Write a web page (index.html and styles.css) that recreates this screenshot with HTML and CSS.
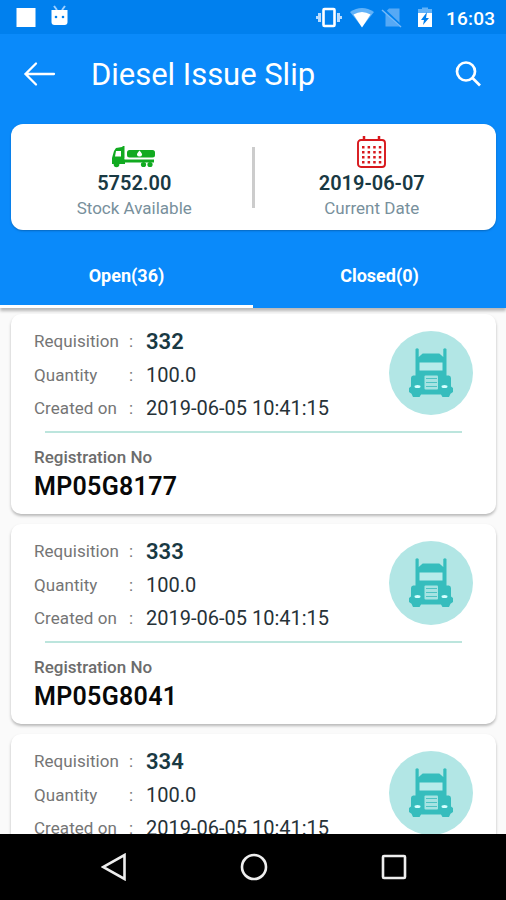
FILE: index.html
```html
<!DOCTYPE html>
<html lang="en">
<head>
<meta charset="utf-8">
<title>Diesel Issue Slip</title>
<link rel="stylesheet" href="styles.css">
</head>
<body>
<svg class="defs" aria-hidden="true">
  <symbol id="truck" viewBox="0 0 44 52">
    <path fill="#36bdbd" d="M6.500 2q1.600-1.600 3.200 0v8l4-3.500h16.600l4 3.500V2q1.600-1.600 3.200 0v26.500h2.300q2 .3 2.200 2.500v8.500l2 1.500v4l-2.500 1.700-1.500 3.300h-6.500l-1.500-2.500h-20L10.500 50H4l-1.500-3.300L0 45v-4l2-1.500V31q.2-2.200 2.200-2.500h2.300z"/>
    <rect x="10.500" y="15.500" width="23" height="8" fill="#b8eceb"/>
    <rect x="15.500" y="28.500" width="13.500" height="14" rx="1" fill="#a5e3e2"/>
    <path d="M17 31.500h11M17 35.500h11M17 39.500h11" stroke="#4cc3c3" stroke-width="1.200"/>
    <ellipse cx="8.500" cy="39.500" rx="3" ry="1.500" fill="#d5ffff"/>
    <ellipse cx="35.500" cy="39.500" rx="3" ry="1.500" fill="#d5ffff"/>
  </symbol>
</svg>
<div class="screen">
  <div class="status">
    <svg width="70" height="34" viewBox="0 0 70 34" fill="#fff">
      <rect x="16.500" y="8" width="19" height="19"/>
      <path d="M54 6l3 4M65 6l-3 4" stroke="#9fd0ff" stroke-width="2"/>
      <path d="M51.500 10h16v12q0 3-3 3h-10q-3 0-3-3z"/>
      <circle cx="56" cy="17" r="1.300" fill="#0080ee"/><circle cx="63" cy="17" r="1.300" fill="#0080ee"/>
    </svg>
    <svg class="status-icons" width="125" height="34" viewBox="0 0 125 34" fill="#fff">
      <path fill="#b9dcff" d="M0 16h2v-3h3v9H2v-3H0zM26 16h-2v-3h-3v9h3v-3h2z"/>
      <rect x="7.500" y="9" width="11" height="17" rx="1" fill="none" stroke="#fff" stroke-width="2.600"/>
      <path fill="#62b2f8" d="M34 12q12-8 24 0L46 27z"/>
      <path d="M37.500 14.500q8.500-5 17 0L46 27.500z"/>
      <path fill="#56a9f5" d="M73 8.500h10.500v18H69.500V12z"/>
      <path d="M67 9l19 18" stroke="#0080ee" stroke-width="3"/>
      <path d="M66 10l19 17" stroke="#75bafa" stroke-width="1.500"/>
      <path fill="#62b2f8" d="M106 7.500h6V9h4v5h-14V9h4z"/>
      <path d="M102 13h14v14h-14z"/>
      <path fill="#0080ee" d="M111 12l-6 8h3l-1 5 6-7h-3z"/>
    </svg>
    <span class="clock">16:03</span>
  </div>
  <header class="toolbar">
    <svg class="back" width="34" height="26" viewBox="0 0 34 26" fill="none" stroke="#fff" stroke-width="2.300" stroke-linecap="round"><path d="M14 2.500L3.500 13 14 23.500M3.500 13H32"/></svg>
    <h1>Diesel Issue Slip</h1>
    <svg class="search" width="28" height="28" viewBox="0 0 28 28" fill="none" stroke="#fff" stroke-width="2.700"><circle cx="12" cy="11.500" r="9"/><path d="M18.500 18l7.500 7.500"/></svg>
  </header>
  <section class="summary">
    <div class="stat left">
      <svg width="44" height="22" viewBox="0 0 44 22" fill="#11aa20">
        <path d="M2 5l2-3 6-1 1-1h1.500v13H42v3.500H13V18H0v-6z"/>
        <path fill="#fff" d="M4 5h5v5.500H3zM12.500 12.500H42v1H12.500z"/>
        <rect x="15" y="4" width="28" height="7.500" rx="2.500"/>
        <path fill="#fff" d="M27.500 4.500q3 3 2.500 4.500-.5 1.500-2.500 1.500T25 9q-.5-1.500 2.500-4.500z"/>
        <circle cx="4.500" cy="18.500" r="2.800"/><circle cx="31.500" cy="18.500" r="2.600"/><circle cx="38" cy="18.500" r="2.600"/>
      </svg>
      <strong>5752.00</strong>
      <span>Stock Available</span>
    </div>
    <div class="divider"></div>
    <div class="stat right">
      <svg width="29" height="32" viewBox="0 0 29 32" fill="none" stroke="#d8181c">
        <rect x="1" y="4" width="27" height="27" rx="3" stroke-width="1.900"/>
        <path d="M7 0v5M22 0v5" stroke-width="2.500"/>
        <path d="M5 11.300h19.500M5 16.300h19.500M5 21.300h19.500M5 26.300h19.500" stroke-width="2.500" stroke-dasharray="2.500 3.100"/>
      </svg>
      <strong>2019-06-07</strong>
      <span>Current Date</span>
    </div>
  </section>
  <nav class="tabs"><div class="tab active">Open(36)</div><div class="tab">Closed(0)</div></nav>
  <main class="list">
    <article class="card">
      <div class="top">
        <dl>
          <dt>Requisition</dt><dd class="colon">:</dd><dd class="number">332</dd>
          <dt>Quantity</dt><dd class="colon">:</dd><dd>100.0</dd>
          <dt>Created on</dt><dd class="colon">:</dd><dd>2019-06-05 10:41:15</dd>
        </dl>
        <div class="avatar"><svg width="44" height="52"><use href="#truck"/></svg></div>
      </div>
      <hr>
      <p class="reg-label">Registration No</p>
      <p class="reg">MP05G8177</p>
    </article>
    <article class="card">
      <div class="top">
        <dl>
          <dt>Requisition</dt><dd class="colon">:</dd><dd class="number">333</dd>
          <dt>Quantity</dt><dd class="colon">:</dd><dd>100.0</dd>
          <dt>Created on</dt><dd class="colon">:</dd><dd>2019-06-05 10:41:15</dd>
        </dl>
        <div class="avatar"><svg width="44" height="52"><use href="#truck"/></svg></div>
      </div>
      <hr>
      <p class="reg-label">Registration No</p>
      <p class="reg">MP05G8041</p>
    </article>
    <article class="card">
      <div class="top">
        <dl>
          <dt>Requisition</dt><dd class="colon">:</dd><dd class="number">334</dd>
          <dt>Quantity</dt><dd class="colon">:</dd><dd>100.0</dd>
          <dt>Created on</dt><dd class="colon">:</dd><dd>2019-06-05 10:41:15</dd>
        </dl>
        <div class="avatar"><svg width="44" height="52"><use href="#truck"/></svg></div>
      </div>
    </article>
  </main>
  <footer class="navbar">
    <svg width="26" height="28" viewBox="0 0 26 28"><path d="M23.500 2v24L2 14z"/></svg>
    <svg width="28" height="28" viewBox="0 0 28 28"><circle cx="14" cy="14" r="12"/></svg>
    <svg width="26" height="26" viewBox="0 0 26 26"><rect x="2" y="2" width="22" height="22" rx="1"/></svg>
  </footer>
</div>
</body>
</html>
```

FILE: styles.css
```css
* { box-sizing: border-box; }
body { margin: 0; font-family: Roboto, "Liberation Sans", sans-serif; }
.defs { display: none; }
svg { display: block; flex: none; }
h1, p, dl, dd { margin: 0; }
.screen { width: 506px; height: 900px; display: flex; flex-direction: column; overflow: hidden; background: #0a8afa; }
.status { height: 34px; flex: none; display: flex; background: #0080ee; color: #fff; }
.status-icons { margin-left: 246px; }
.clock { margin-left: 5px; font-size: 19px; line-height: 37px; font-weight: 500; letter-spacing: 0.2px; }
.toolbar { height: 80px; flex: none; display: flex; align-items: center; color: #fff; padding: 0 24px 0 22px; }
h1 { flex: 1; margin-left: 35px; font-size: 31px; font-weight: 400; line-height: 40px; padding-top: 2px; letter-spacing: -0.03px; }
.summary { height: 106px; flex: none; margin: 10px 10px 0 11px; border-radius: 12px; background: #fff; display: flex; align-items: center; box-shadow: 0 1px 2px #0868bd; }
.stat { flex: 1; height: 94px; display: flex; flex-direction: column; align-items: center; justify-content: flex-end; color: #78909c; font-size: 17px; line-height: 24px; }
.stat.left { padding-left: 6px; }
.stat.right { padding-right: 7px; }
.stat svg { margin-bottom: 2px; }
.stat strong { font-size: 20px; line-height: 26px; font-weight: 600; color: #193943; letter-spacing: 0; }
.stat span { margin-bottom: 4px; }
.divider { width: 3px; height: 61px; background: #ccc; }
.tabs { height: 66px; margin-top: 12px; flex: none; display: flex; color: #fff; font-size: 18px; font-weight: 700; position: relative; box-shadow: 0 3px 3px #0004; }
.tab { flex: 1; text-align: center; line-height: 67px; border-bottom: 3px solid transparent; }
.tab.active { border-color: #fff; }
.list { height: 526px; flex: none; overflow: hidden; background: #fafafa; padding: 6px 10px 0 11px; display: flex; flex-direction: column; gap: 10px; }
.card { height: 200px; flex: none; background: #fff; border-radius: 10px; box-shadow: 0 2px 3px #0004; padding: 10px 23px; }
.top { height: 107px; display: flex; justify-content: space-between; }
dl { display: grid; grid-template-columns: 95px 17px auto; grid-template-rows: 34px 34px 32px; align-items: center; }
dt, .colon { color: #757575; font-size: 17px; }
dt { letter-spacing: 0.05px; }
dd { color: #263238; font-size: 20px; letter-spacing: 0; white-space: nowrap; }
.number { font-weight: 600; font-size: 22px; color: #193943; }
.avatar { width: 84px; height: 84px; margin-top: 6.5px; border-radius: 50%; background: #b2e6e5; display: flex; align-items: center; justify-content: center; }
hr { height: 2px; margin: 0 11px; border: 0; background: #bce5dd; }
.reg-label { margin-top: 12px; font-size: 17px; line-height: 24px; font-weight: 500; color: #6c6c6c; }
.reg { margin-top: 2px; font-size: 25px; line-height: 32px; font-weight: 600; color: #080808; letter-spacing: 0.3px; }
.navbar { height: 66px; flex: none; display: flex; align-items: center; justify-content: space-between; padding: 0 99px 0 101px; background: #000; }
.navbar svg { fill: none; stroke: #eee; stroke-width: 2.6; }
```
